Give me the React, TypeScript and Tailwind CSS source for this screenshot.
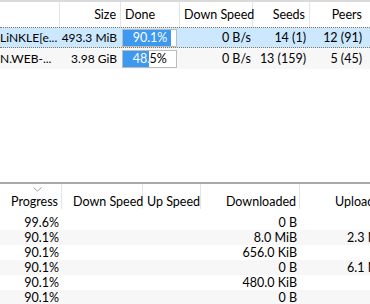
import React from "react";

const topCols = "grid-cols-[60px_61px_59px_73px_57px_60px]";
const botCols = "grid-cols-[62px_81px_58px_99px_70px]";

const torrents = [
  { name: "LiNKLE[e...", size: "493.3 MiB", done: 90.1, down: "0 B/s", seeds: "14 (1)", peers: "12 (91)", selected: true },
  { name: "N.WEB-...", size: "3.98 GiB", done: 48.5, down: "0 B/s", seeds: "13 (159)", peers: "5 (45)", selected: false },
];

const files = [
  { progress: "99.6%", downloaded: "0 B", uploaded: "" },
  { progress: "90.1%", downloaded: "8.0 MiB", uploaded: "2.3 MiB" },
  { progress: "90.1%", downloaded: "656.0 KiB", uploaded: "" },
  { progress: "90.1%", downloaded: "0 B", uploaded: "6.1 MiB" },
  { progress: "90.1%", downloaded: "480.0 KiB", uploaded: "" },
  { progress: "90.1%", downloaded: "0 B", uploaded: "" },
];

const ProgressCell = ({ value }: { value: number }) => {
  const label = value.toFixed(1) + "%";
  return (
    <div className="flex h-full items-center pl-px pr-[3px]">
      <div className="relative h-[18px] w-full border border-[#bcbcbc] bg-white">
        <div className="absolute inset-0 flex items-center justify-center whitespace-nowrap text-black">{label}</div>
        <div
          className="absolute inset-y-0 left-0 overflow-hidden bg-[#3d98f0]"
          style={{ width: `${value}%` }}
        >
          <div className="flex h-full w-[54px] items-center justify-center whitespace-nowrap text-white">{label}</div>
        </div>
      </div>
    </div>
  );
};

export default function App() {
  return (
    <div className="relative h-[304px] w-[370px] overflow-hidden bg-white text-[12.5px] leading-[15px] text-black [font-family:Lato,'Noto_Sans',sans-serif]">
      {/* torrent list */}
      <div className="border-t-2 border-[#dadada]">
        <div className={`grid h-[25px] ${topCols} items-center whitespace-nowrap`}>
          <div className="h-full border-r border-[#e5e5e5]" />
          <div className="flex h-full items-center justify-end border-r border-[#e5e5e5] pr-[4px]">Size</div>
          <div className="flex h-full items-center border-r border-[#e5e5e5] pl-[4px]">Done</div>
          <div className="flex h-full items-center border-r border-[#e5e5e5] pl-[4px]">Down Speed</div>
          <div className="flex h-full items-center justify-end border-r border-[#e5e5e5] pr-[4px]">Seeds</div>
          <div className="flex h-full items-center justify-end pr-[8px]">Peers</div>
        </div>
        {torrents.map((t) => (
          <div
            key={t.name}
            className={`grid h-[21px] ${topCols} items-center whitespace-nowrap ${
              t.selected
                ? "border-y border-dotted border-[#8a7a5a] bg-[#cce8ff]"
                : "border-y border-transparent bg-[#f7f7f7]"
            }`}
          >
            <div className="overflow-hidden text-[12px]">{t.name}</div>
            <div className="pr-[4px] text-right text-[12px]">{t.size}</div>
            <ProgressCell value={t.done} />
            <div className="pr-[2px] text-right">{t.down}</div>
            <div className="pr-[4px] text-right">{t.seeds}</div>
            <div className="pr-[8px] text-right">{t.peers}</div>
          </div>
        ))}
      </div>

      {/* splitter + file list */}
      <div className="absolute inset-x-0 top-[182px]">
        <div className="border-t-2 border-[#a9a9a9]" />
        <div className={`grid h-[31px] ${botCols} items-end whitespace-nowrap pb-[6px]`}>
          <div className="relative flex h-full items-end justify-end border-r border-[#e5e5e5] pr-[3px]">
            <svg className="absolute left-[33px] top-[3px]" width="9" height="5" viewBox="0 0 9 5">
              <path d="M0.5 0.5 L4.5 4 L8.5 0.5" fill="none" stroke="#a0a0a0" strokeWidth="1" />
            </svg>
            Progress
          </div>
          <div className="flex h-full items-end border-r border-[#e5e5e5] pl-[11px]">Down Speed</div>
          <div className="flex h-full items-end border-r border-[#e5e5e5] pl-[4px]">Up Speed</div>
          <div className="flex h-full items-end justify-end border-r border-[#e5e5e5] pr-[3px]">Downloaded</div>
          <div className="flex h-full items-end pl-[35px]">Uploaded</div>
        </div>
        {files.map((f, i) => (
          <div
            key={i}
            className={`grid h-[15px] ${botCols} items-center whitespace-nowrap ${
              i % 2 === 1 ? "bg-[#f7f7f7]" : "bg-white"
            }`}
          >
            <div className="pr-[3px] text-right">{f.progress}</div>
            <div />
            <div />
            <div className="pr-[3px] text-right">{f.downloaded}</div>
            <div className="whitespace-nowrap pl-[47px]">{f.uploaded}</div>
          </div>
        ))}
      </div>
    </div>
  );
}
